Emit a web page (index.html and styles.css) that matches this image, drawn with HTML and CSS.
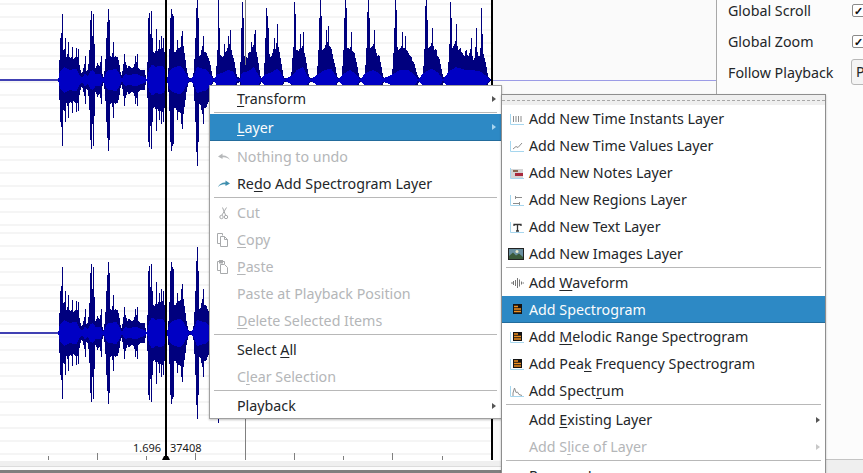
FILE: index.html
```html
<!DOCTYPE html>
<html lang="en">
<head>
<meta charset="utf-8">
<title>Sonic Visualiser</title>
<link rel="stylesheet" href="styles.css">
</head>
<body>
<div class="app">
  <div class="work">
    <div class="panes">
      <div class="view">
        <svg class="wave" width="493" height="461" viewBox="0 0 493 461" aria-hidden="true">
          <defs>
            <g id="half">
              <path class="outer" d="M59 0L59-4 60-36 61-40 62-34 63-32 64-28 65-34 66-24 67-22 68-30 69-22 70-24 71-20 72-26 73-18 74-24 75-20 76-26 77-20 78-26 79-18 80-12 81-9 82-6 83-10 84-14 85-18 86-9 87-8 88-12 89-20 90-34 91-30 92-34 93-28 94-24 95-14 96-11 97-16 98-18 99-12 100-16 101-20 102-10 103-3 104-2 105-16 106-26 107-32 108-34 109-30 110-24 111-24 112-22 113-32 114-20 115-26 116-22 117-24 118-22 119-18 120-12 121-5 122-4 123-14 124-18 125-20 126-16 127-14 128-11 129-16 130-12 131-14 132-11 133-13 134-14 135-18 136-16 137-20 138-12 139-11 140-12 141-9 142-11 143-9 144-11 145-9 146-1 147-2 148-34 149-38 150-34 151-36 152-30 153-26 154-30 155-24 156-34 157-30 158-28 159-34 160-26 161-36 162-30 163-34 164-30 165-26 166-10 167-3 168-2 170-40 171-36 172-38 173-34 174-26 175-30 176-26 177-34 178-30 179-34 180-30 181-36 182-40 183-38 184-30 185-24 186-16 187-9 188-5 189-2 193-2 194-12 195-30 196-36 197-34 198-30 199-26 200-22 201-28 202-32 203-36 204-30 205-26 206-30 207-24 208-24 209-20 210-18 211-12 212-7 213-2 216-2 217-26 218-34 219-32 220-28 221-22 222-26 223-20 224-28 225-26 226-30 227-28 228-36 229-32 230-40 231-34 232-26 233-24 234-20 235-16 236-9 237-3 240-2 241-34 242-36 243-32 244-26 245-22 246-26 247-20 248-24 249-30 250-26 251-30 252-34 253-32 254-38 255-40 256-30 257-26 258-20 259-14 260-7 261-2 264-2 265-32 266-36 267-34 268-32 269-28 270-24 271-22 272-26 273-28 274-34 275-30 276-32 277-42 278-36 279-30 280-26 281-18 282-14 283-7 284-2 291-2 292-14 293-30 294-36 295-34 296-32 297-28 298-32 299-26 300-36 301-34 302-30 303-38 304-28 305-26 306-20 307-14 308-9 309-4 310-2 317-2 318-26 319-34 320-38 321-34 322-32 323-28 324-34 325-30 326-40 327-34 328-42 329-36 330-32 331-34 332-28 333-24 334-18 335-16 336-10 337-4 338-2 342-2 343-26 344-34 345-38 346-36 347-34 348-30 349-34 350-28 351-38 352-32 353-26 354-30 355-24 356-20 357-16 358-10 359-5 360-2 365-2 366-28 367-36 368-40 369-34 370-34 371-30 372-36 373-32 374-40 375-34 376-28 377-26 378-22 379-28 380-20 381-16 382-10 383-5 384-2 392-2 393-20 394-34 395-38 396-36 397-34 398-32 399-28 400-34 401-30 402-38 403-34 404-30 405-34 406-28 407-32 408-26 409-28 410-22 411-26 412-20 413-18 414-18 415-14 416-10 417-7 418-3 419-2 423-2 424-26 425-36 426-38 427-34 428-34 429-30 430-36 431-32 432-42 433-36 434-32 435-28 436-34 437-26 438-22 439-24 440-18 441-14 442-9 443-4 444-2 448-2 449-34 450-38 451-36 452-34 453-30 454-38 455-34 456-44 457-36 458-32 459-28 460-34 461-30 462-26 463-28 464-22 465-26 466-32 467-28 468-22 469-26 470-28 471-34 472-26 473-22 474-18 475-26 476-40 477-30 478-26 479-22 480-26 481-38 482-36 483-28 484-24 485-20 486-16 487-10 488-5 489-2 491-1 491 0Z"/>
              <path class="spikes" d="M60.500 0V-42M61.500 0V-47M62.500 0V-66M65.500 0V-42M68.500 0V-38M72.500 0V-33M76.500 0V-32M78.500 0V-31M85.500 0V-24M89.500 0V-30M90.500 0V-60M91.500 0V-69M92.500 0V-44M93.500 0V-66M94.500 0V-36M101.500 0V-24M106.500 0V-42M107.500 0V-58M108.500 0V-71M109.500 0V-60M113.500 0V-38M124.500 0V-26M135.500 0V-24M137.500 0V-26M148.500 0V-62M149.500 0V-67M150.500 0V-46M151.500 0V-69M152.500 0V-42M156.500 0V-51M159.500 0V-40M161.500 0V-44M163.500 0V-42M170.500 0V-62M171.500 0V-71M172.500 0V-66M173.500 0V-64M177.500 0V-40M181.500 0V-44M182.500 0V-49M195.500 0V-42M196.500 0V-72M197.500 0V-86M198.500 0V-62M203.500 0V-44M218.500 0V-90M219.500 0V-52M224.500 0V-36M228.500 0V-44M230.500 0V-50M241.500 0V-52M242.500 0V-78M243.500 0V-62M251.500 0V-38M254.500 0V-46M255.500 0V-50M265.500 0V-42M266.500 0V-72M267.500 0V-64M268.500 0V-52M274.500 0V-42M277.500 0V-56M294.500 0V-78M295.500 0V-66M300.500 0V-46M303.500 0V-48M319.500 0V-62M320.500 0V-84M321.500 0V-64M326.500 0V-50M328.500 0V-54M344.500 0V-62M345.500 0V-80M346.500 0V-72M351.500 0V-48M367.500 0V-68M368.500 0V-82M369.500 0V-62M374.500 0V-50M394.500 0V-52M395.500 0V-80M396.500 0V-70M402.500 0V-48M405.500 0V-44M425.500 0V-74M426.500 0V-84M427.500 0V-60M432.500 0V-52M450.500 0V-78M451.500 0V-62M456.500 0V-56M471.500 0V-42M476.500 0V-52M481.500 0V-72M482.500 0V-46"/>
              <path class="inner" transform="scale(1 .72)" d="M58 0L60-12 64-18 70-14 76-16 80-6 82-3 85-9 88-5 90-12 93-14 96-8 100-9 103-2 106-10 108-14 112-14 116-16 119-10 122-2 125-8 130-7 136-9 140-6 145-4 147-1 149-15 152-22 156-18 160-20 164-18 167-2 170-14 175-18 180-20 184-14 188-4 190-1 194-6 197-18 202-16 207-14 212-4 214-1 217-8 222-10 228-14 233-12 237-2 240-1 242-10 248-12 254-18 258-8 261-1 265-8 271-10 277-16 281-10 284-1 292-6 297-14 303-18 308-4 311-1 318-8 325-14 331-16 336-6 338-1 343-8 350-14 356-8 360-1 366-10 373-14 379-10 383-2 393-8 400-14 408-14 414-8 418-1 424-10 432-16 438-10 443-1 449-12 456-18 465-14 472-14 480-12 486-6 490-1 491 0Z"/>
            </g>
            <g id="channel">
              <path class="base" d="M0 0H491"/>
              <use href="#half"/>
              <use href="#half" transform="scale(1 -1)"/>
            </g>
          </defs>
          <use href="#channel" transform="translate(0 80)"/>
          <use href="#channel" transform="translate(0 333)"/>
          <path class="tick" d="M48.500 456V460M97.500 453V460M146.500 456V460M195.500 453V460M245.500 0V65M245.500 418V460M294.500 453V460M343.500 456V460M392.500 453V460M442.500 456V460"/>
          <path class="edge" d="M492 0V460"/>
          <path class="play" d="M166 0V456"/>
          <path class="playfoot" d="M162 460H170L168 456H164Z"/>
        </svg>
        <span class="stamp stamp-time">1.696</span>
        <span class="stamp stamp-frame">37408</span>
      </div>
      <div class="blank"><div class="blank-line"></div></div>
    </div>
    <div class="band"></div>
    <div class="dock"></div>
  </div>
  <aside class="side">
    <div class="opt"><span class="opt-label">Global Scroll</span><span class="check">✓</span></div>
    <div class="opt"><span class="opt-label">Global Zoom</span><span class="check">✓</span></div>
    <div class="opt"><span class="opt-label">Follow Playback</span><span class="combo">Page</span></div>
    <div class="side-foot"></div>
  </aside>
</div>

<nav class="menu menu-main">
  <div class="item first"><span class="ic"></span><span class="tx"><u>T</u>ransform</span><i class="arrow"></i></div>
  <div class="sep sep-top"></div>
  <div class="item on"><span class="ic"></span><span class="tx"><u>L</u>ayer</span><i class="arrow"></i></div>
  <div class="gap"></div>
  <div class="item off"><span class="ic"><svg width="16" height="16" viewBox="0 0 16 16"><path class="i-undo" d="M14 11C12.500 7.500 9 6 6.500 6.500V4.500L2 7.500 6.500 10V8.500C9 8 12 8.800 14 11Z"/></svg></span><span class="tx">Nothing to undo</span></div>
  <div class="item"><span class="ic"><svg width="16" height="16" viewBox="0 0 16 16"><path class="i-redo" d="M2 11C3.500 7.500 7 6 9.500 6.500V4.500L14 7.500 9.500 10V8.500C7 8 4 8.800 2 11Z"/></svg></span><span class="tx">Re<u>d</u>o Add Spectrogram Layer</span></div>
  <div class="sep"></div>
  <div class="item off"><span class="ic"><svg width="16" height="16" viewBox="0 0 16 16"><path class="i-line" d="M10.500 2.500L6 10M6.500 2.500L9.500 10"/><circle class="i-line" cx="5.500" cy="12" r="1.700"/><circle class="i-line" cx="10" cy="12" r="1.700"/></svg></span><span class="tx">Cut</span></div>
  <div class="item off"><span class="ic"><svg width="16" height="16" viewBox="0 0 16 16"><path class="i-line" d="M1.500 1.500H6.500V3.500M1.500 1.500V11.500H4.500M4.500 4.500H8.500L11.500 7.500V14.500H4.500ZM8.500 4.500V7.500H11.500"/></svg></span><span class="tx"><u>C</u>opy</span></div>
  <div class="item off"><span class="ic"><svg width="16" height="16" viewBox="0 0 16 16"><path class="i-line" d="M1.500 2.500H8.500V5M1.500 2.500V11.500H4.500M4.500 5.500H8.500L11.500 8.500V14.500H4.500Z"/><path class="i-fill" d="M3 1H7V4.500H3Z"/></svg></span><span class="tx"><u>P</u>aste</span></div>
  <div class="item off"><span class="ic"></span><span class="tx">Paste at Playback Position</span></div>
  <div class="item off"><span class="ic"></span><span class="tx"><u>D</u>elete Selected Items</span></div>
  <div class="sep"></div>
  <div class="item"><span class="ic"></span><span class="tx">Select <u>A</u>ll</span></div>
  <div class="item off"><span class="ic"></span><span class="tx">C<u>l</u>ear Selection</span></div>
  <div class="sep"></div>
  <div class="item"><span class="ic"></span><span class="tx">Playback</span><i class="arrow"></i></div>
</nav>

<nav class="menu menu-sub">
  <div class="tear"></div>
  <div class="item"><span class="ic"><svg width="16" height="16" viewBox="0 0 16 16"><path class="i-axis" d="M2.500 3V13.500H16"/><path class="i-dark" d="M5.500 5V11M8 5V11M10.500 5V11M13 5V11"/></svg></span><span class="tx">Add New Time Instants Layer</span></div>
  <div class="item"><span class="ic"><svg width="16" height="16" viewBox="0 0 16 16"><path class="i-axis" d="M2.500 3V13.500H16"/><path class="i-dark" d="M5 11L8 8.500 10 9.500 14 5"/></svg></span><span class="tx">Add New Time Values Layer</span></div>
  <div class="item"><span class="ic"><svg width="16" height="16" viewBox="0 0 16 16"><path class="i-axis" d="M2.500 3V13.500H16"/><rect class="i-notes" x="3" y="4" width="12" height="9"/><rect class="i-note-a" x="5" y="5" width="5" height="2"/><rect class="i-note-b" x="7" y="8" width="8" height="3"/></svg></span><span class="tx">Add New Notes Layer</span></div>
  <div class="item"><span class="ic"><svg width="16" height="16" viewBox="0 0 16 16"><path class="i-axis" d="M2.500 3V13.500H16"/><path class="i-dark" d="M8 5.500H14M5 11.500H11M7.500 4V7M11.500 10V13"/></svg></span><span class="tx">Add New Regions Layer</span></div>
  <div class="item"><span class="ic"><svg width="16" height="16" viewBox="0 0 16 16"><path class="i-axis" d="M2.500 3V13.500H16"/><path class="i-text" d="M6 7V5.500H13V7M9.500 5.500V12M8 12H11"/></svg></span><span class="tx">Add New Text Layer</span></div>
  <div class="item"><span class="ic"><svg width="16" height="16" viewBox="0 0 16 16"><path class="i-sky" d="M1 3H15V13H1Z"/><path class="i-hill" d="M1 13V10L5 6.500 8 9.500 11 7.500 15 11V13Z"/><circle class="i-sun" cx="9" cy="5.500" r="1.500"/><rect class="i-frame" x=".500" y="2.500" width="15" height="11"/></svg></span><span class="tx">Add New Images Layer</span></div>
  <div class="sep"></div>
  <div class="item"><span class="ic"><svg width="16" height="16" viewBox="0 0 16 16"><path class="i-wave" d="M3 8H5M5.500 6V10M7.500 5V11M9.500 3V13M11.500 4.500V11.500M13.500 6.500V9.500M14.500 8H16"/></svg></span><span class="tx">Add <u>W</u>aveform</span></div>
  <div class="item on"><span class="ic"><svg width="16" height="16" viewBox="0 0 16 16"><rect class="i-spec" x="5" y="3" width="9" height="10"/><path class="i-bars" d="M6 5.500H10M6 8H13M6 10.500H13"/></svg></span><span class="tx">Add Spectrogram</span></div>
  <div class="item"><span class="ic"><svg width="16" height="16" viewBox="0 0 16 16"><path class="i-axis" d="M2.500 3V13.500H16"/><rect class="i-spec" x="5" y="3" width="9" height="9"/><path class="i-bars" d="M6 5H10M6 7.500H13M6 10H13"/></svg></span><span class="tx">Add <u>M</u>elodic Range Spectrogram</span></div>
  <div class="item"><span class="ic"><svg width="16" height="16" viewBox="0 0 16 16"><path class="i-axis" d="M2.500 3V13.500H16"/><rect class="i-spec" x="5" y="3" width="9" height="9"/><path class="i-bars" d="M6 5H10M6 7.500H13M6 10H13"/></svg></span><span class="tx">Add Pea<u>k</u> Frequency Spectrogram</span></div>
  <div class="item"><span class="ic"><svg width="16" height="16" viewBox="0 0 16 16"><path class="i-axis" d="M2.500 3V13.500H16"/><path class="i-dark" d="M5 13V10L6.500 5 8 9.500 9.500 9 11 11.500 14 12.500"/></svg></span><span class="tx">Add Spect<u>r</u>um</span></div>
  <div class="sep"></div>
  <div class="item"><span class="ic"></span><span class="tx">Add <u>E</u>xisting Layer</span><i class="arrow"></i></div>
  <div class="item off"><span class="ic"></span><span class="tx">Add S<u>l</u>ice of Layer</span><i class="arrow"></i></div>
  <div class="sep"></div>
  <div class="item"><span class="ic"></span><span class="tx">Rename Layer...</span></div>
</nav>
</body>
</html>
```
FILE: styles.css
```css
* { box-sizing: border-box; }
html, body { margin: 0; width: 863px; height: 473px; overflow: hidden; background: #fcfcfc; }
body { position: relative; font-family: "Noto Sans", sans-serif; font-size: 14.25px; color: #232629; }

.app { display: flex; width: 863px; height: 473px; }
.work { flex: none; width: 717px; display: flex; flex-direction: column; }
.panes { display: flex; height: 461px; }
.view {
  position: relative;
  flex: none;
  width: 493px;
  height: 461px;
  background:
    repeating-linear-gradient(#fff 0 3px, #f5f5f5 3px 5px, #fff 5px 13px) 0 0 / 100% 230px no-repeat,
    repeating-linear-gradient(#fff 0 2px, #f5f5f5 2px 4px, #fff 4px 13px) 0 230px / 100% 231px no-repeat;
}
.wave { display: block; }
.blank { flex: 1; background: #fafafa; padding-top: 80px; border-right: 1px solid #a8a8a8; }
.blank-line { height: 1px; background: #9c9ce6; }
.band { height: 6px; background: #efefef; border-bottom: 1px solid #dcdcdc; }
.dock { height: 6px; background: linear-gradient(#fcfcfc 0 3px, #7f7f7f 3px); }

.outer { fill: #00007e; shape-rendering: crispEdges; }
.spikes { fill: none; stroke: #00007e; stroke-width: 1; shape-rendering: crispEdges; }
.inner { fill: #0000c4; shape-rendering: crispEdges; }
.base { stroke: #00009a; stroke-width: 1.500; fill: none; }
.tick { stroke: #808080; stroke-width: 1; fill: none; }
.edge { stroke: #000; stroke-width: 2; fill: none; }
.play { stroke: #000; stroke-width: 2; fill: none; }
.playfoot { fill: #000; }
.stamp { position: absolute; top: 441px; font-size: 11px; line-height: 14px; color: #1a1a1a; }
.stamp-time { left: 133px; }
.stamp-frame { left: 170px; }

.side { flex: 1; min-width: 0; display: flex; flex-direction: column; padding-left: 11px; background: #fcfcfc; }
.opt { display: flex; align-items: center; flex: none; height: 31px; white-space: nowrap; }
.opt-label { flex: none; width: 123px; margin-top: -10px; }
.check { flex: none; width: 13px; height: 13px; margin: -11px 0 0 1px; border: 1px solid #8a8a8a; border-radius: 2px; background: #fff; font-size: 11px; line-height: 11px; font-weight: 700; color: #111; text-align: center; }
.combo { flex: none; height: 26px; width: 40px; margin-top: -12px; padding: 2px 0 0 4px; border: 1px solid #b8b8b8; border-radius: 3px; background: #f4f4f4; }
.side-foot { height: 14px; margin: auto 0 0 -11px; background: #efefef; border-top: 1px solid #c4c4c4; }

.menu { position: absolute; background: #fff; border: 1px solid #a0a0a0; box-shadow: 0 1px 2px rgba(0,0,0,.25); white-space: nowrap; }
.menu-main { left: 209px; top: 85px; width: 293px; height: 334px; }
.menu-sub { left: 501px; top: 94px; width: 325px; height: 400px; border-color: #8e8e8e; }
.tear { height: 10px; background: #efefef; padding-top: 5px; }
.tear::before { content: ""; display: block; border-top: 1px dashed #a8a8a8; }
.item { display: flex; align-items: center; flex: none; height: 27px; padding: 0 4px 0 6px; }
.item.first { height: 25px; }
.ic { flex: none; width: 16px; height: 16px; margin-right: 5px; display: block; }
.ic svg { display: block; }
.tx { flex: none; }
.item.off { color: #b4b6b8; }
.item.on { background: #2d89c5; color: #fcfcfc; border-bottom: 1px solid #236c9c; }
.sep { height: 1px; background: #b8b8b8; margin: 0 4px 1px; }
.sep-top { margin-top: 1px; }
.gap { height: 2px; }
u { text-decoration-thickness: 1px; text-underline-offset: 2px; }
.arrow { margin-left: auto; margin-right: 1px; width: 0; height: 0; border-left: 4px solid #555; border-top: 3.500px solid transparent; border-bottom: 3.500px solid transparent; }
.on .arrow { border-left-color: #a8d4ef; }
.off .arrow { border-left-color: #c8c8c8; }

.i-undo { fill: #b6b8ba; }
.i-redo { fill: #3f8fae; }
.i-line { fill: none; stroke: #a8aaac; stroke-width: 1; }
.i-fill { fill: #a8aaac; }
.i-axis { fill: none; stroke: #a6d6ee; stroke-width: 1; }
.i-dark { fill: none; stroke: #8d8d8d; stroke-width: 1; }
.i-notes { fill: #d4d4d4; }
.i-note-a { fill: #8a6a50; }
.i-note-b { fill: #a8283c; }
.i-text { fill: none; stroke: #333; stroke-width: 1.300; }
.i-frame { fill: none; stroke: #222; stroke-width: 1; }
.i-sky { fill: #6a90a0; }
.i-hill { fill: #3a5a3a; }
.i-sun { fill: #e8e8c8; }
.i-wave { fill: none; stroke: #777; stroke-width: 1; }
.i-spec { fill: #141414; }
.i-bars { fill: none; stroke: #f09020; stroke-width: 1.400; }
```
